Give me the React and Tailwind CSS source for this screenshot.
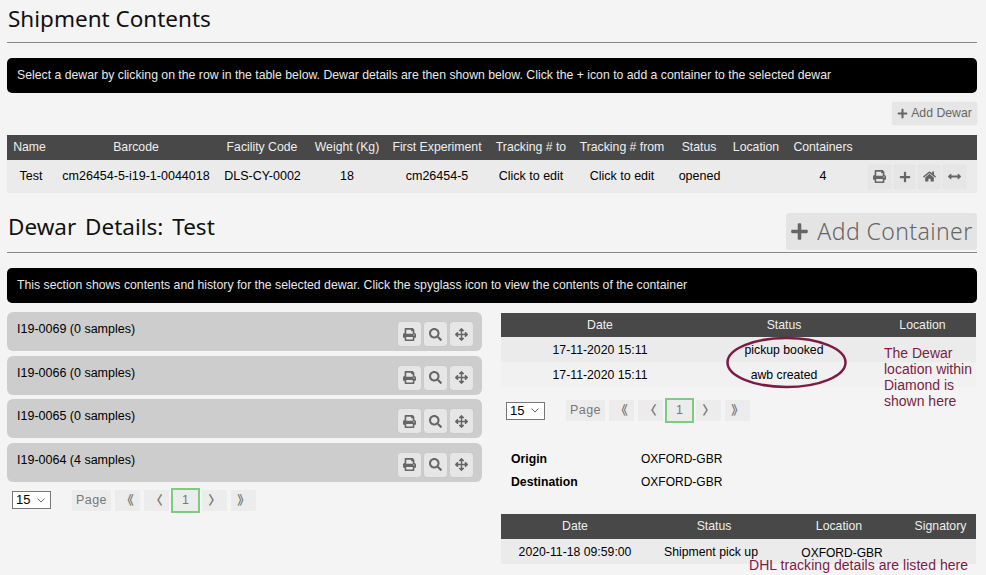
import { FaPrint, FaPlus, FaHome, FaArrowsAltH, FaSearch, FaArrowsAlt } from "react-icons/fa";

const arial = "font-['Liberation_Sans',Arial,sans-serif]";
const heading = "font-['Noto_Sans',sans-serif] font-normal";
const cjk = "font-['Noto_Sans_CJK_SC',sans-serif] font-bold";

const containers = ["I19-0069 (0 samples)", "I19-0066 (0 samples)", "I19-0065 (0 samples)", "I19-0064 (4 samples)"];

function IconBtn({ icon: Icon, size = 13, className = "w-[23px]" }) {
  return (
    <button className={`${className} h-[24px] flex items-center justify-center rounded-[3px] bg-[#e6e6e6] shadow-[0_0_1px_rgba(0,0,0,0.12)] text-[#666]`}>
      <Icon style={{ fontSize: size }} />
    </button>
  );
}

function PagerCell({ children, className = "w-[25px]" }) {
  return <li className={`${className} h-[21px] flex items-center justify-center bg-[#ececec] text-[#777]`}>{children}</li>;
}

function Pager() {
  return (
    <div className="flex items-center">
      <div className="w-[39px] h-[18px] flex items-center justify-between pl-[3px] pr-[5px] border border-[#777] bg-white text-[13px] text-black">
        15
        <svg width="8" height="5" viewBox="0 0 8 5" fill="none" stroke="#666"><path d="M0.5 0.5 L4 4 L7.5 0.5" /></svg>
      </div>
      <ul className="flex items-center ml-[21px] text-[12.5px]">
        <PagerCell className="w-[39px] tracking-[0.4px]">Page</PagerCell>
        <PagerCell className="w-[25px] ml-[4px]"><span className={cjk}>《</span></PagerCell>
        <PagerCell className="w-[25px] ml-[4px]"><span className={cjk}>〈</span></PagerCell>
        <li className="w-[29px] h-[25px] ml-[2px] flex items-center justify-center border-2 border-[#7fcb7f] bg-[#ececec] text-[#777]">1</li>
        <PagerCell className="w-[25px] ml-[2px]"><span className={cjk}>〉</span></PagerCell>
        <PagerCell className="w-[25px] ml-[4px]"><span className={cjk}>》</span></PagerCell>
      </ul>
    </div>
  );
}

function Banner({ children }) {
  return <div className="h-[35px] px-[10px] flex items-center rounded-[5px] bg-black text-[12.25px] text-[#e8e8e8]">{children}</div>;
}

export default function App() {
  return (
    <div className={`${arial} relative w-[986px] h-[575px] overflow-hidden bg-[#f4f4f4] px-[7px] pt-[3px] text-[12.5px] text-black`}>
      <h1 className={`${heading} h-[40px] pb-[8px] pl-[1px] flex items-end text-[22.5px] leading-[30px] text-[#111] border-b border-[#888] w-[970px]`}>Shipment Contents</h1>

      <div className="w-[970px] mt-[15px]"><Banner>Select a dewar by clicking on the row in the table below. Dewar details are then shown below. Click the + icon to add a container to the selected dewar</Banner></div>

      <div className="w-[970px] flex justify-end mt-[9px]">
        <button className="w-[85px] h-[23px] flex items-center justify-center gap-[3px] rounded-[3px] bg-[#e6e6e6] shadow-[0_0_1px_rgba(0,0,0,0.15)] text-[12.25px] text-[#666]">
          <FaPlus className="text-[11px]" /> Add Dewar
        </button>
      </div>

      <table className="w-[970px] table-fixed mt-[10px] border-collapse">
        <colgroup>
          <col className="w-[48px]" /><col className="w-[162px]" /><col className="w-[90px]" /><col className="w-[80px]" /><col className="w-[100px]" />
          <col className="w-[88px]" /><col className="w-[94px]" /><col className="w-[60px]" /><col className="w-[54px]" /><col className="w-[80px]" /><col className="w-[114px]" />
        </colgroup>
        <thead>
          <tr className="h-[25px] bg-[#484848] text-[12.25px] text-[#eee] text-center whitespace-nowrap [&>th]:font-normal">
            <th className="pr-[3px]">Name</th><th>Barcode</th><th>Facility Code</th><th>Weight (Kg)</th><th>First Experiment</th>
            <th>Tracking # to</th><th>Tracking # from</th><th>Status</th><th>Location</th><th>Containers</th><th></th>
          </tr>
        </thead>
        <tbody>
          <tr className="h-[33px] bg-[#ebebeb] text-center whitespace-nowrap">
            <td>Test</td><td>cm26454-5-i19-1-0044018</td><td className="pl-[1px]">DLS-CY-0002</td><td>18</td><td>cm26454-5</td>
            <td>Click to edit</td><td>Click to edit</td><td className="pl-[1px]">opened</td><td></td><td>4</td>
            <td>
              <div className="flex items-center gap-[3px] pl-[5px]">
                <IconBtn icon={FaPrint} />
                <IconBtn icon={FaPlus} size={12} className="w-[21px]" />
                <IconBtn icon={FaHome} className="w-[22px]" />
                <IconBtn icon={FaArrowsAltH} className="w-[23px]" />
              </div>
            </td>
          </tr>
        </tbody>
      </table>

      <div className="w-[970px] h-[59px] mt-[1px] flex items-end justify-between border-b border-[#888]">
        <h2 className={`${heading} [word-spacing:3px] pl-[1px] text-[22.5px] leading-[30px] text-[#111] pb-[10px]`}>Dewar Details: Test</h2>
        <button className="font-['Noto_Sans',sans-serif] font-light tracking-[0.4px] w-[191px] h-[37px] mb-[2px] flex items-center justify-center gap-[8px] rounded-[3px] bg-[#e4e4e4] text-[23px] text-[#666]">
          <FaPlus className="text-[19px]" /> Add Container
        </button>
      </div>

      <div className="w-[970px] mt-[15px]"><Banner>This section shows contents and history for the selected dewar. Click the spyglass icon to view the contents of the container</Banner></div>

      <div className="flex gap-[19px] w-[970px] mt-[9px]">
        <div className="w-[475px] flex flex-col">
          {containers.map((c) => (
            <div key={c} className="h-[39px] mb-[4.67px] flex justify-between rounded-[6px] bg-[#cdcdcd] pl-[10px] pr-[9px]">
              <span className="pt-[8px]">{c}</span>
              <div className="flex gap-[3px] pt-[10px]">
                <IconBtn icon={FaPrint} />
                <IconBtn icon={FaSearch} />
                <IconBtn icon={FaArrowsAlt} />
              </div>
            </div>
          ))}
          <div className="pl-[5px] mt-[1px]"><Pager /></div>
        </div>

        <div className="w-[476px] flex flex-col text-[12.25px]">
          <table className="w-[475px] table-fixed border-collapse mt-[1px]">
            <colgroup><col className="w-[198px]" /><col className="w-[170px]" /><col className="w-[107px]" /></colgroup>
            <thead>
              <tr className="h-[24px] bg-[#484848] text-[#eee] text-center [&>th]:font-normal"><th>Date</th><th>Status</th><th>Location</th></tr>
            </thead>
            <tbody className="text-center [&_td]:pt-[2px]">
              <tr className="h-[25px] bg-[#ebebeb]"><td>17-11-2020 15:11</td><td>pickup booked</td><td></td></tr>
              <tr className="h-[25px] bg-[#f1f1f1]"><td>17-11-2020 15:11</td><td>awb created</td><td></td></tr>
            </tbody>
          </table>
          <div className="pl-[5px] mt-[11px]"><Pager /></div>

          <dl className="mt-[29px] pl-[10px] grid grid-cols-[130px_1fr] gap-y-[8px] leading-[15px]">
            <dt className="font-bold">Origin</dt><dd className="text-[12px]">OXFORD-GBR</dd>
            <dt className="font-bold">Destination</dt><dd className="text-[12px]">OXFORD-GBR</dd>
          </dl>

          <table className="w-[475px] table-fixed border-collapse mt-[24px]">
            <colgroup><col className="w-[148px]" /><col className="w-[130px]" /><col className="w-[120px]" /><col className="w-[77px]" /></colgroup>
            <thead>
              <tr className="h-[25px] bg-[#484848] text-[#eee] text-center [&>th]:font-normal"><th>Date</th><th>Status</th><th>Location</th><th className="pl-[6px]">Signatory</th></tr>
            </thead>
            <tbody className="text-center [&_td]:pt-[2px]">
              <tr className="h-[25px] bg-[#ebebeb] whitespace-nowrap"><td>2020-11-18 09:59:00</td><td className="pr-[6px]">Shipment pick up</td><td className="pl-[6px] text-[12px]">OXFORD-GBR</td><td></td></tr>
            </tbody>
          </table>
        </div>
      </div>

      {/* annotations drawn over the screenshot */}
      <svg className="absolute left-[722px] top-[335px]" width="130" height="56" viewBox="0 0 130 56" fill="none">
        <ellipse cx="64.5" cy="27.5" rx="59" ry="24.5" stroke="#7c1c44" strokeWidth="2.5" />
      </svg>
      <p className="absolute left-[884px] top-[345px] w-[95px] text-[14px] leading-[16px] text-[#7c1c44]">The Dewar location within Diamond is shown here</p>
      <p className="absolute left-[749px] top-[557px] text-[14px] leading-[16px] tracking-[0.05px] whitespace-nowrap text-[#7c1c44]">DHL tracking details are listed here</p>
    </div>
  );
}
